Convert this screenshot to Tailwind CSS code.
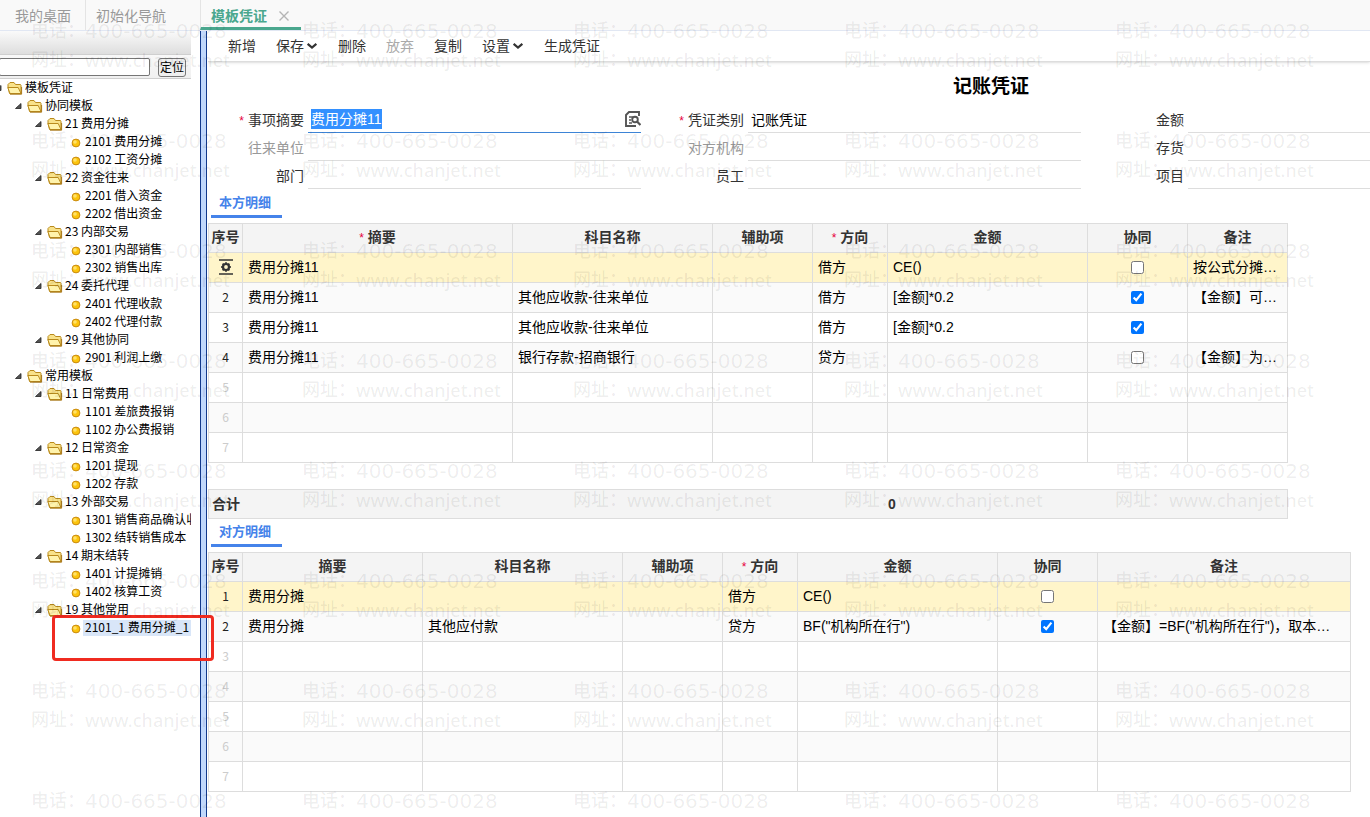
<!DOCTYPE html>
<html lang="zh-CN">
  <head>
    <meta charset="UTF-8" />
    <meta name="viewport" content="width=device-width, initial-scale=1.0" />
    <title>模板凭证</title>
    <script src="https://cdn.jsdelivr.net/npm/@tailwindcss/browser@4"></script>
  </head>
  <body
    class="relative flex flex-col h-screen overflow-hidden bg-white text-sm text-black font-['Liberation_Sans','Noto_Sans_CJK_SC',sans-serif]"
  >
    <!-- 标签页 -->
    <nav class="flex shrink-0 h-[31px] bg-[#f9f9f9] border-b border-[#e1e7f3] text-[#999]">
      <a href="#" class="flex items-center w-[85px] pl-[15px] pt-px">我的桌面</a>
      <a href="#" class="flex items-center w-[115px] pl-[10px] pt-px border-l border-[#e4e4e4]">初始化导航</a>
      <div class="flex items-center w-[101px] pl-[10px] pt-1 border-l border-b-3 border-l-[#e4e4e4] border-b-[#4aa78e]">
        <a href="#" class="font-bold text-[#4aa78e]">模板凭证</a>
        <button type="button" aria-label="关闭" class="ml-[11px]">
          <svg class="w-3 h-3" viewBox="0 0 12 12" fill="none" stroke="#b5b5b5" stroke-width="1.4">
            <path d="M1.5 1.5l9 9M10.5 1.5l-9 9" />
          </svg>
        </button>
      </div>
    </nav>

    <div class="flex flex-1 min-h-0">
      <!-- 左侧树 -->
      <aside class="flex flex-col shrink-0 w-[191px] mr-[9px] overflow-hidden text-xs font-['Noto_Sans_CJK_SC',sans-serif]">
        <div class="shrink-0 h-6 bg-linear-to-b from-[#fafafa] to-[#dedede] border-b border-[#cfcfcf]"></div>
        <form class="flex items-center shrink-0 h-6 pt-px bg-linear-to-b from-[#f8f8f8] to-[#f0f0f0] border-b border-[#cfcfcf]">
          <input
            type="text"
            id="keyword"
            aria-label="关键字"
            class="w-[151px] h-[18px] -ml-px bg-white border border-[#767676] rounded-xs"
          />
          <button
            type="button"
            class="w-7 h-[19px] ml-2 leading-4 whitespace-nowrap bg-[#efefef] border border-[#767676] rounded-[3px]"
          >
            定位
          </button>
        </form>
        <ul id="tree" class="whitespace-nowrap"></ul>
      </aside>

      <div class="shrink-0 w-[7px] mr-px bg-[#c1d8fb] border-x border-[#12398c]"></div>

      <!-- 凭证 -->
      <main class="flex-1 min-w-0 overflow-hidden">
        <div class="flex items-center h-[31px] pl-5 gap-5 text-[#333] border-b border-[#ddd] shadow-sm">
          <button type="button">新增</button>
          <button type="button" class="flex items-center gap-0.5">
            保存
            <svg class="w-3 h-3" viewBox="0 0 11 11" fill="none" stroke="#333" stroke-width="2">
              <path d="M1.5 3.5l4 3.5 4-3.5" />
            </svg>
          </button>
          <button type="button">删除</button>
          <button type="button" disabled class="text-[#aaa]">放弃</button>
          <button type="button">复制</button>
          <button type="button" class="flex items-center gap-0.5">
            设置
            <svg class="w-3 h-3" viewBox="0 0 11 11" fill="none" stroke="#333" stroke-width="2">
              <path d="M1.5 3.5l4 3.5 4-3.5" />
            </svg>
          </button>
          <button type="button">生成凭证</button>
        </div>

        <!-- 表单比窗口宽，右侧被截断 -->
        <div class="min-w-[1566px]">
          <h1 class="h-[43px] pt-[11px] text-center text-[19px] leading-7 font-bold">记账凭证</h1>
          <form class="grid grid-cols-[repeat(3,440px)] auto-rows-[28px] text-[#333]">
            <div class="flex items-stretch gap-1 pr-[7px]">
              <label for="summary" class="w-24 text-right leading-[30px]"><span class="mr-1 text-xs text-[#e6003c]">*</span>事项摘要</label>
              <div class="flex flex-1 items-center min-w-0 pt-px border-b border-[#3d84d6]">
                <input
                  type="text"
                  id="summary"
                  value="费用分摊11"
                  class="flex-1 min-w-0 pl-[3px] text-black outline-none selection:bg-[#3390ff] selection:text-white"
                />
                <button type="button" aria-label="查找">
                  <svg class="w-4 h-4" viewBox="0 0 16 16" fill="none" stroke="#555" stroke-width="1.9">
                    <path d="M14 5V1H4L1 4v11h10" />
                    <path d="M4 6h4M4 9h2M4 12h3" stroke-width="1.4" />
                    <circle cx="10" cy="8.5" r="2.8" />
                    <path d="M12 10.5l3.5 3.5" stroke-width="2.2" />
                  </svg>
                </button>
              </div>
            </div>
            <div class="flex items-stretch gap-1 pr-[7px]">
              <label for="type" class="w-24 text-right leading-[30px]"><span class="mr-1 text-xs text-[#e6003c]">*</span>凭证类别</label>
              <input type="text" id="type" value="记账凭证" class="flex-1 min-w-0 pl-[3px] pt-0.5 text-black border-b border-[#ddd]" />
            </div>
            <div class="flex items-stretch gap-1 pr-[7px]">
              <label for="amount" class="w-24 text-right leading-[30px]">金额</label>
              <input type="text" id="amount" class="flex-1 min-w-0 border-b border-[#ddd]" />
            </div>
            <div class="flex items-stretch gap-1 pr-[7px]">
              <label for="partner" class="w-24 text-right leading-[30px] text-[#999]">往来单位</label>
              <input type="text" id="partner" disabled class="flex-1 min-w-0 border-b border-[#ddd]" />
            </div>
            <div class="flex items-stretch gap-1 pr-[7px]">
              <label for="org" class="w-24 text-right leading-[30px] text-[#999]">对方机构</label>
              <input type="text" id="org" disabled class="flex-1 min-w-0 border-b border-[#ddd]" />
            </div>
            <div class="flex items-stretch gap-1 pr-[7px]">
              <label for="stock" class="w-24 text-right leading-[30px]">存货</label>
              <input type="text" id="stock" class="flex-1 min-w-0 border-b border-[#ddd]" />
            </div>
            <div class="flex items-stretch gap-1 pr-[7px]">
              <label for="dept" class="w-24 text-right leading-[30px]">部门</label>
              <input type="text" id="dept" class="flex-1 min-w-0 border-b border-[#ddd]" />
            </div>
            <div class="flex items-stretch gap-1 pr-[7px]">
              <label for="staff" class="w-24 text-right leading-[30px]">员工</label>
              <input type="text" id="staff" class="flex-1 min-w-0 border-b border-[#ddd]" />
            </div>
            <div class="flex items-stretch gap-1 pr-[7px]">
              <label for="project" class="w-24 text-right leading-[30px]">项目</label>
              <input type="text" id="project" class="flex-1 min-w-0 border-b border-[#ddd]" />
            </div>
          </form>

          <h2 class="w-[71px] h-[29px] ml-[3px] mb-[5px] pl-2 text-[13px] leading-7 font-bold text-[#4583ea] border-b-3 border-[#4583ea]">本方明细</h2>
          <table class="w-[1080px] table-fixed border-separate border-spacing-0 border-l border-t border-[#ddd]">
            <colgroup>
              <col class="w-[34px]" />
              <col class="w-[270px]" />
              <col class="w-[200px]" />
              <col class="w-[100px]" />
              <col class="w-[75px]" />
              <col class="w-[200px]" />
              <col class="w-[100px]" />
              <col class="w-[100px]" />
            </colgroup>
            <thead id="ownHead"></thead>
            <tbody id="ownBody"></tbody>
          </table>

          <table class="w-[1080px] mt-[26px] table-fixed border-separate border-spacing-0 border border-[#ddd] bg-[#f4f4f4]">
            <tbody>
              <tr class="h-7 font-bold text-[#333]">
                <th class="w-[679px] pl-[3px] text-left">合计</th>
                <td>0</td>
              </tr>
            </tbody>
          </table>

          <h2 class="w-[71px] h-7 ml-[3px] mb-[5px] pl-2 text-[13px] leading-[26px] font-bold text-[#4583ea] border-b-3 border-[#4583ea]">对方明细</h2>
          <table class="w-[1143px] table-fixed border-separate border-spacing-0 border-l border-t border-[#ddd]">
            <colgroup>
              <col class="w-[34px]" />
              <col class="w-[180px]" />
              <col class="w-[200px]" />
              <col class="w-[100px]" />
              <col class="w-[75px]" />
              <col class="w-[200px]" />
              <col class="w-[100px]" />
              <col class="w-[253px]" />
            </colgroup>
            <thead id="otherHead"></thead>
            <tbody id="otherBody"></tbody>
          </table>
        </div>
      </main>
    </div>

    <!-- 标注框 -->
    <div class="absolute left-[52px] top-[615px] w-[162px] h-[46px] border-3 border-[#f02b20] rounded-sm pointer-events-none"></div>

    <!-- 水印 -->
    <div
      id="watermark"
      aria-hidden="true"
      class="absolute inset-0 overflow-hidden grid grid-cols-[repeat(5,271px)] auto-rows-[110px] pl-[31px] pt-[17px] text-lg leading-[29px] font-medium whitespace-nowrap text-black/7 pointer-events-none"
    ></div>

    <script>
      // [层级, 名称]
      const nodes = [
        [0, "模板凭证"],
        [1, "协同模板"],
        [2, "21 费用分摊"],
        [3, "2101 费用分摊"],
        [3, "2102 工资分摊"],
        [2, "22 资金往来"],
        [3, "2201 借入资金"],
        [3, "2202 借出资金"],
        [2, "23 内部交易"],
        [3, "2301 内部销售"],
        [3, "2302 销售出库"],
        [2, "24 委托代理"],
        [3, "2401 代理收款"],
        [3, "2402 代理付款"],
        [2, "29 其他协同"],
        [3, "2901 利润上缴"],
        [1, "常用模板"],
        [2, "11 日常费用"],
        [3, "1101 差旅费报销"],
        [3, "1102 办公费报销"],
        [2, "12 日常资金"],
        [3, "1201 提现"],
        [3, "1202 存款"],
        [2, "13 外部交易"],
        [3, "1301 销售商品确认收入"],
        [3, "1302 结转销售成本"],
        [2, "14 期末结转"],
        [3, "1401 计提摊销"],
        [3, "1402 核算工资"],
        [2, "19 其他常用"],
        [3, "2101_1 费用分摊_1"],
      ];
      const selected = "2101_1 费用分摊_1";
      const indents = ["-ml-[13px]", "pl-[7px]", "pl-[27px]", "pl-[47px]"];

      const arrow = `<svg class="shrink-0 w-5 h-4" viewBox="0 0 20 16"><path d="M14 5.5v5H8.5z" fill="#555" stroke="#222" stroke-width=".8" stroke-linejoin="round"/></svg>`;
      const folder = `<svg class="shrink-0 w-4 h-4" viewBox="0 0 16 16" stroke="#b98a1c" stroke-linejoin="round">
        <path d="M2.5 13.5L1 7V4.5L3 2.5h4l1.5 2h5l.5 1v8z" fill="#f8e28a"/>
        <path d="M.8 7.5h10.4l2.8 6H3z" fill="#fff3ac"/>
        <path d="M3 14.2h11.6V7" fill="none" stroke="#a9791a"/>
      </svg>`;
      const bullet = `<svg class="shrink-0 w-4 h-4" viewBox="0 0 16 16"><circle cx="9" cy="9" r="3.9" fill="#fcc40c" stroke="#c98a10"/><circle cx="8" cy="8" r="1.8" fill="#ffe169"/></svg>`;

      document.getElementById("tree").innerHTML = nodes
        .map(([level, label]) => {
          const icons =
            level === 3 ? `<span class="shrink-0 w-5"></span>${bullet}` : arrow + folder;
          const mark = label === selected ? "bg-[#d9e6f8]" : "";
          return `<li class="flex items-center h-[18px] ${indents[level]}">
            ${icons}<a href="#" class="px-0.5 pb-0.5 leading-[14px] ${mark}">${label}</a>
          </li>`;
        })
        .join("");

      const star = `<span class="mr-1 text-xs font-normal text-[#e6003c]">*</span>`;
      const gear = `<svg class="w-4 h-4 mx-auto" viewBox="0 0 16 16" fill="none" stroke="#333">
        <path d="M1 1h14M1 15h14" stroke-width="1.6"/>
        <circle cx="8" cy="8" r="3" stroke-width="2.2"/>
        <path d="M8 3.2v1.6M8 11.2v1.6M3.2 8h1.6M11.2 8h1.6M4.6 4.6l1 1M10.4 10.4l1 1M4.6 11.4l1-1M10.4 5.6l1-1" stroke-width="1.8"/>
      </svg>`;

      function renderHead(id, required) {
        const titles = ["序号", "摘要", "科目名称", "辅助项", "方向", "金额", "协同", "备注"];
        document.getElementById(id).innerHTML =
          `<tr class="h-[29px] bg-[#f4f4f4] text-[#333]">` +
          titles
            .map(
              (t) =>
                `<th class="pb-0.5 border-r border-b border-[#ddd] font-bold leading-5">${required.includes(t) ? star : ""}${t}</th>`
            )
            .join("") +
          "</tr>";
      }

      function renderBody(id, rows, firstMark) {
        let html = "";
        for (let i = 0; i < 7; i++) {
          const row = rows[i];
          const bg = i === 0 ? "bg-[#fff5ca]" : i % 2 ? "bg-[#fafafa]" : "bg-white";
          const color = row ? "text-[#222]" : "text-[#ccc]";
          html += `<tr class="h-[30px] ${bg}"><td class="pb-px border-r border-b border-[#ddd] text-center text-xs font-['Noto_Sans_CJK_SC'] leading-5 ${color}">${i === 0 ? firstMark : i + 1}</td>`;
          for (let c = 0; c < 7; c++) {
            const v = row ? row[c] : "";
            if (c === 5 && row) {
              html += `<td class="border-r border-b border-[#ddd]"><input type="checkbox" aria-label="协同 ${i + 1}" class="block mx-auto w-[13px] h-[13px]" ${v ? "checked" : ""} /></td>`;
            } else {
              html += `<td class="px-[5px] pb-0.5 border-r border-b border-[#ddd] leading-5 whitespace-nowrap overflow-hidden">${v}</td>`;
            }
          }
          html += "</tr>";
        }
        document.getElementById(id).innerHTML = html;
      }

      renderHead("ownHead", ["摘要", "方向"]);
      renderBody(
        "ownBody",
        [
          ["费用分摊11", "", "", "借方", "CE()", false, "按公式分摊…"],
          ["费用分摊11", "其他应收款-往来单位", "", "借方", "[金额]*0.2", true, "【金额】可…"],
          ["费用分摊11", "其他应收款-往来单位", "", "借方", "[金额]*0.2", true, ""],
          ["费用分摊11", "银行存款-招商银行", "", "贷方", "", false, "【金额】为…"],
        ],
        gear
      );
      renderHead("otherHead", ["方向"]);
      renderBody(
        "otherBody",
        [
          ["费用分摊", "", "", "借方", "CE()", false, ""],
          ["费用分摊", "其他应付款", "", "贷方", 'BF("机构所在行")', true, '【金额】=BF("机构所在行")，取本…'],
        ],
        "1"
      );

      document.getElementById("watermark").innerHTML = `<div>
          <div class="flex"><span class="w-[54px]">电话：</span><span class="text-xl leading-[29px] font-['DejaVu_Sans']">400-665-0028</span></div>
          <div class="flex"><span class="w-[54px]">网址：</span><span class="font-['Noto_Sans']">www.chanjet.net</span></div>
        </div>`.repeat(40);

      const summary = document.getElementById("summary");
      summary.focus();
      summary.select();
    </script>
  </body>
</html>
